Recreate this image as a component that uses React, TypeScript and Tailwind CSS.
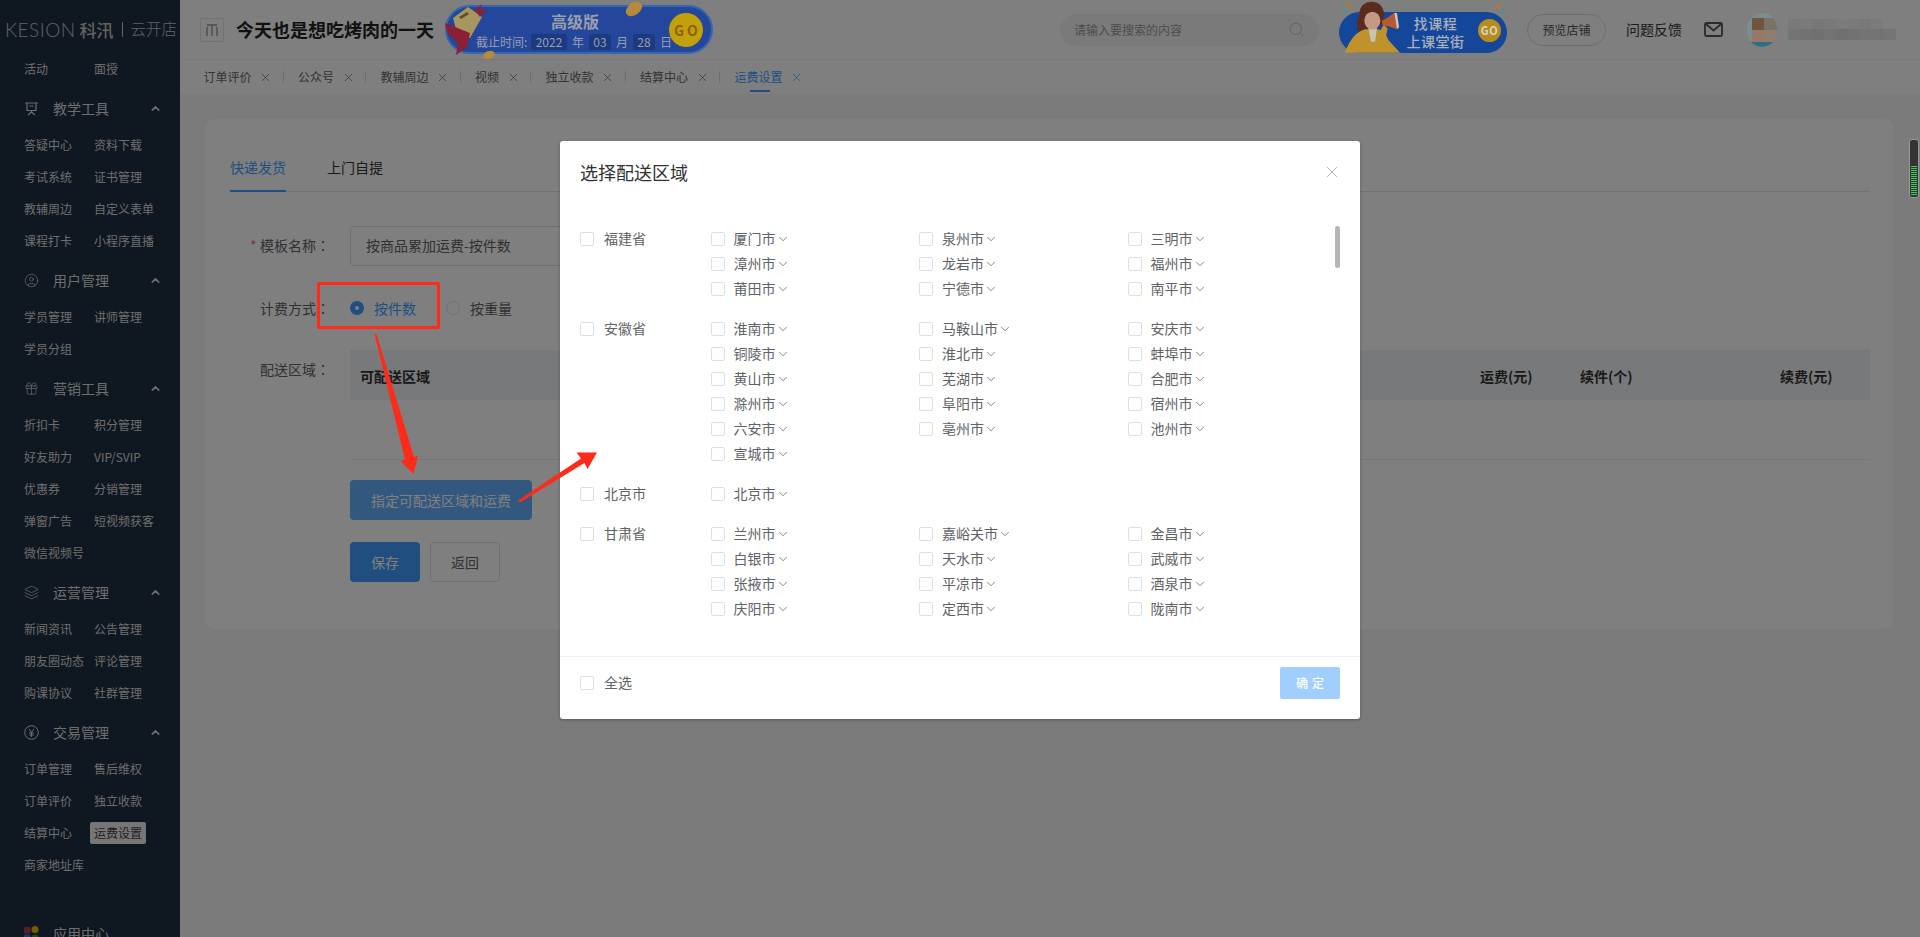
import { ChevronDown, ChevronUp, CircleUser, Gift, Layers, Search, X } from 'lucide-react'
import type { ReactNode } from 'react'

const EaselIcon = () => (
  <svg width="15" height="15" viewBox="0 0 15 15" fill="none" stroke="currentColor" strokeWidth="1.2">
    <path d="M1 2h13M3 2v7.5h9V2M7.5 9.5v1.5M4 14l3.5-3 3.5 3M5.5 5h4" />
  </svg>
)

const YenIcon = () => (
  <svg width="15" height="15" viewBox="0 0 15 15" fill="none" stroke="currentColor" strokeWidth="1">
    <circle cx="7.5" cy="7.5" r="6.8" />
    <path d="M5 4l2.5 3.5L10 4M7.5 7.5V12M5.2 8h4.6M5.2 10h4.6" />
  </svg>
)

const AppsIcon = () => (
  <svg width="15" height="15" viewBox="0 0 15 15">
    <rect x="0" y="1" width="6.5" height="6.5" rx="1.5" fill="#b0414c" />
    <circle cx="11" cy="3.5" r="3.5" fill="#e6b800" />
    <rect x="0" y="8.5" width="6.5" height="6.5" rx="1.5" fill="#3b78d8" />
    <rect x="8" y="8.5" width="6.5" height="6.5" rx="3" fill="#2e9c4a" />
  </svg>
)

const groups: { title: string; icon: ReactNode; items: string[] }[] = [
  { title: '教学工具', icon: <EaselIcon />, items: ['答疑中心', '资料下载', '考试系统', '证书管理', '教辅周边', '自定义表单', '课程打卡', '小程序直播'] },
  { title: '用户管理', icon: <CircleUser size={17} strokeWidth={1.1} />, items: ['学员管理', '讲师管理', '学员分组'] },
  { title: '营销工具', icon: <Gift size={17} strokeWidth={1.1} />, items: ['折扣卡', '积分管理', '好友助力', 'VIP/SVIP', '优惠券', '分销管理', '弹窗广告', '短视频获客', '微信视频号'] },
  { title: '运营管理', icon: <Layers size={17} strokeWidth={1.1} />, items: ['新闻资讯', '公告管理', '朋友圈动态', '评论管理', '购课协议', '社群管理'] },
  { title: '交易管理', icon: <YenIcon />, items: ['订单管理', '售后维权', '订单评价', '独立收款', '结算中心', '运费设置', '商家地址库'] },
]

const tabs = ['订单评价', '公众号', '教辅周边', '视频', '独立收款', '结算中心', '运费设置']

const provinces = [
  { name: '福建省', cities: ['厦门市', '泉州市', '三明市', '漳州市', '龙岩市', '福州市', '莆田市', '宁德市', '南平市'] },
  { name: '安徽省', cities: ['淮南市', '马鞍山市', '安庆市', '铜陵市', '淮北市', '蚌埠市', '黄山市', '芜湖市', '合肥市', '滁州市', '阜阳市', '宿州市', '六安市', '亳州市', '池州市', '宣城市'] },
  { name: '北京市', cities: ['北京市'] },
  { name: '甘肃省', cities: ['兰州市', '嘉峪关市', '金昌市', '白银市', '天水市', '武威市', '张掖市', '平凉市', '酒泉市', '庆阳市', '定西市', '陇南市'] },
]

// blurred-out user name in the header
const nameTop = ['#797979', '#7b7b7b', '#777777', '#797979', '#7c7c7c', '#7a7a7a', '#787878', '#7b7b7b']
const nameBottom = ['#747474', '#727272', '#707070', '#737373', '#707070', '#727272', '#747474', '#737373', '#757575']

const Check = () => <span className="inline-block w-[14px] h-[14px] shrink-0 bg-white border border-[#dcdfe6] rounded-[2px]" />
const Colon = () => <span className="[font-family:'Noto_Sans_CJK_TC',sans-serif]">：</span>

function Sidebar() {
  return (
    <aside className="w-[180px] shrink-0 h-[937px] overflow-hidden bg-[#1e2e40] text-[#dcdcdc]">
      <div className="h-[54px] pt-[4px] pl-[5px] flex items-center text-[#c4c4c4] leading-none">
        <span className="[font-family:Lato,sans-serif] font-light text-[19px] tracking-[0.5px]">KESION</span>
        <span className="ml-[4px] text-[17px] font-medium">科汛</span>
        <span className="ml-[8px] mr-[8px] w-px h-[15px] bg-[#c4c4c4]" />
        <span className="text-[15.5px] font-light">云开店</span>
      </div>
      <div className="grid grid-cols-[70px_70px] pl-[24px] pb-[2px] h-[32px] text-[12px] leading-[30px]">
        <span>活动</span>
        <span>面授</span>
      </div>
      {groups.map((g, i) => (
        <div key={g.title} className={i === 0 ? 'mt-[3px]' : 'mt-[4px]'}>
          <div className="h-[40px] flex items-center pl-[24px] pr-[18px] pb-[2px]">
            <span className="w-[15px] flex justify-center">{g.icon}</span>
            <span className="ml-[14px] text-[14px] flex-1">{g.title}</span>
            <ChevronUp size={13} strokeWidth={3} />
          </div>
          <div className="grid grid-cols-[70px_70px] pl-[24px] text-[12px] leading-[32px]">
            {g.items.map(t => (
              <span key={t} className="h-[32px]">
                {t === '运费设置' ? (
                  <span className="inline-block -ml-[4px] px-[4px] h-[22px] leading-[22px] rounded-[2px] bg-[#ececec] text-[#444]">{t}</span>
                ) : t}
              </span>
            ))}
          </div>
        </div>
      ))}
      <div className="mt-[32px] h-[40px] flex items-center pl-[24px]">
        <AppsIcon />
        <span className="ml-[14px] text-[14px]">应用中心</span>
      </div>
    </aside>
  )
}

function PlanBanner() {
  return (
    <div className="relative z-40 ml-[12px] w-[268px] h-[49px] rounded-full bg-[#24479b] border-2 border-[#3767ad] text-[#9a9fae]">
      <svg className="absolute -left-[2px] -top-[2px] overflow-visible" width="268" height="49" fill="none">
        <path d="M8 13L23 2l14 10-12 21-12-1z" fill="#a89660" />
        <path d="M14 12l8-5 2 2-8 5z" fill="#5c5030" />
        <path d="M0 18l25 10-3 14-11 8 2-12-11-11z" fill="#8c1f33" />
        <path d="M30 5l7-6-2 6 7-1-7 8z" fill="#8c1f33" />
        <ellipse cx="189" cy="4" rx="9" ry="6" transform="rotate(-35 189 4)" fill="#b48a3c" />
        <ellipse cx="44" cy="50" rx="6" ry="4" transform="rotate(-20 44 50)" fill="#b48a3c" />
      </svg>
      <div className="absolute left-[93px] top-[3px] w-[70px] text-center font-bold text-[16px] leading-[22px]">高级版</div>
      <div className="absolute left-[29px] top-[27px] flex items-center h-[16px] text-[12px] whitespace-nowrap">
        <span className="w-[55px]">截止时间:</span>
        <span className="w-[36px] text-center leading-[16px] rounded-[2px] bg-[#1b3a80]">2022</span>
        <span className="w-[22px] text-center">年</span>
        <span className="w-[22px] text-center leading-[16px] rounded-[2px] bg-[#1b3a80]">03</span>
        <span className="w-[22px] text-center">月</span>
        <span className="w-[22px] text-center leading-[16px] rounded-[2px] bg-[#1b3a80]">28</span>
        <span className="w-[22px] text-center">日</span>
      </div>
      <div className="absolute left-[222px] top-[6px] w-[34px] h-[34px] rounded-full bg-[#c4a008] flex items-center justify-center text-[14px] font-bold tracking-[3px] pl-[3px] text-[#8c5f10]">GO</div>
    </div>
  )
}

function CourseBanner() {
  return (
    <div className="relative z-40 ml-[20px] w-[168px] h-[60px]">
      <div className="absolute left-0 top-[12px] w-[168px] h-[41px] rounded-full bg-[#14479a] flex flex-col items-center pl-[25px] text-[#aab0bc] text-[14px] leading-[18px] tracking-[0.5px] font-medium pt-[2px]">
        <span>找课程</span>
        <span>上课堂街</span>
      </div>
      <div className="absolute left-[139px] top-[19px] w-[23px] h-[23px] rounded-full bg-[#b88c1c] flex items-center justify-center text-[11px] font-bold tracking-[0.5px] text-[#d6d6c8]">GO</div>
      <svg className="absolute -left-[4px] top-0" width="180" height="60" viewBox="0 0 540 180" fill="none">
        <path d="M72 45Q75 5 112 5Q148 8 147 50L142 72L110 95L68 92Q62 70 72 45Z" fill="#5a2c1e" />
        <path d="M30 158Q50 100 90 88L130 88Q150 92 160 120L195 158Z" fill="#c0922c" />
        <path d="M100 85h26l-6 40h-12z" fill="#c9c4b0" />
        <ellipse cx="112" cy="62" rx="24" ry="27" fill="#c49a84" />
        <path d="M84 38Q112 14 138 42L136 30Q112 8 86 28Z" fill="#5a2c1e" />
        <path d="M140 62l16-8 22-16 8 50-28-10-12 8z" fill="#b85a30" />
        <path d="M178 38l8 50 6-6-6-42z" fill="#d8c8b0" />
        <path d="M130 105l14-28 14 8-8 38z" fill="#c0922c" />
        <path d="M34 8l16 12M482 24l18-12" stroke="#b47a2a" strokeWidth="7" />
        <path d="M22 30l13 3M498 30l8 8" stroke="#3e9a9a" strokeWidth="7" />
      </svg>
    </div>
  )
}

function Header() {
  return (
    <header className="bg-white h-[94px] shrink-0">
      <div className="h-[60px] flex items-center pl-[20px] pr-[24px] border-b border-[#f2f2f2]">
        <div className="w-[24px] h-[24px] border border-[#e5e5e5] rounded-[2px] flex items-center justify-center text-[#999]">
          <svg width="12" height="12" viewBox="0 0 12 12" fill="none" stroke="currentColor" strokeWidth="1.4">
            <path d="M1 3v9M6 1v11M11 3v9M1 1h10" />
          </svg>
        </div>
        <div className="ml-[12px] w-[197px] text-[18px] leading-[24px] pb-[2px] font-bold text-[#222] whitespace-nowrap">今天也是想吃烤肉的一天</div>
        <PlanBanner />
        <div className="ml-auto w-[259px] h-[32px] rounded-full bg-[#f5f5f7] flex items-center justify-between pl-[14px] pr-[14px] text-[12px] text-[#999]">
          <span>请输入要搜索的内容</span>
          <Search size={17} strokeWidth={1.5} className="text-[#ccc]" />
        </div>
        <CourseBanner />
        <div className="ml-[20px] w-[79px] h-[32px] rounded-full border border-[#ddd] flex items-center justify-center text-[12px] text-[#555]">预览店铺</div>
        <span className="ml-[20px] text-[14px] text-[#333]">问题反馈</span>
        <svg className="ml-[22px]" width="19" height="15" viewBox="0 0 19 15" fill="none" stroke="#555" strokeWidth="1.8">
          <rect x="1" y="1" width="17" height="13" rx="1.5" />
          <path d="M2 2l7.5 6.5L17 2" />
        </svg>
        <div className="relative z-40 ml-[24px] w-[30px] h-[34px] rounded-full overflow-hidden bg-[#7d8c91] grid grid-cols-[5px_12px_13px] grid-rows-[5px_12px_12px_5px]">
          <span className="col-span-3" />
          <span />
          <span className="bg-[#6e553c]" />
          <span className="bg-[#787364]" />
          <span />
          <span className="bg-[#967869]" />
          <span className="bg-[#917d6e]" />
          <span className="col-span-3 bg-[#326e82]" />
        </div>
        <div className="relative z-40 ml-[11px] w-[108px] h-[21px] flex flex-col">
          <div className="flex w-[95px] h-[10px]">
            {nameTop.map((c, i) => <span key={i} className="flex-1" style={{ background: c }} />)}
          </div>
          <div className="flex w-[108px] h-[11px]">
            {nameBottom.map((c, i) => <span key={i} className="flex-1" style={{ background: c }} />)}
          </div>
        </div>
      </div>
      <div className="h-[34px] flex items-center pl-[9px] text-[12px] text-[#666]">
        {tabs.map((t, i) => {
          const active = i === tabs.length - 1
          return (
            <div key={t} className={`relative flex items-center h-[34px] pl-[14.5px] ${active ? 'text-[#409eff]' : ''}`}>
              <span>{t}</span>
              <X size={13} strokeWidth={1.3} className="ml-[7.5px]" />
              <span className={`ml-[10.5px] w-px h-[12px] ${active ? '' : 'bg-[#ddd]'}`} />
              {active && <span className="absolute left-[29.5px] bottom-[2px] w-[20px] h-[2px] bg-[#409eff]" />}
            </div>
          )
        })}
      </div>
    </header>
  )
}

function Card() {
  return (
    <div className="ml-[25px] mt-[25px] w-[1689px] h-[510px] bg-white rounded-[10px] pt-[30px] pl-[25px] pr-[24px] text-[14px] text-[#606266]">
      <div className="h-[43px] flex gap-[41px] border-b border-[#e4e7ed]">
        <span className="h-[43px] leading-[36px] border-b-2 border-[#409eff] text-[#409eff]">快递发货</span>
        <span className="leading-[36px] text-[#333]">上门自提</span>
      </div>
      <div className="mt-[34px] flex items-center h-[40px]">
        <div className="w-[120px] pl-[20px] pb-[2px]"><span className="inline-block w-[10px] text-[#f56c6c]">*</span>模板名称<Colon /></div>
        <div className="w-[500px] h-[40px] rounded-[4px] border border-[#dcdfe6] pl-[15px] leading-[36px]">按商品累加运费-按件数</div>
      </div>
      <div className="mt-[22px] flex items-center h-[40px]">
        <div className="w-[120px] pl-[30px]">计费方式<Colon /></div>
        <span className="w-[14px] h-[14px] rounded-full bg-[#409eff] flex items-center justify-center"><span className="w-[4px] h-[4px] rounded-full bg-white" /></span>
        <span className="ml-[10px] text-[#409eff]">按件数</span>
        <span className="ml-[30px] w-[14px] h-[14px] rounded-full bg-white border border-[#dcdfe6]" />
        <span className="ml-[10px]">按重量</span>
      </div>
      <div className="mt-[22px] flex">
        <div className="w-[120px] pl-[30px] leading-[38px]">配送区域<Colon /></div>
        <div className="flex-1">
          <div className="h-[110px] border-b border-[#ebeef5]">
            <div className="h-[50px] pt-[2px] pl-[10px] bg-[#f1f3f5] grid grid-cols-[1120px_100px_200px_1fr] items-center font-bold text-[#333]">
              <span>可配送区域</span>
              <span>运费(元)</span>
              <span>续件(个)</span>
              <span>续费(元)</span>
            </div>
          </div>
          <button className="block mt-[20px] w-[182px] h-[40px] rounded-[4px] bg-[#66b1ff] text-white">指定可配送区域和运费</button>
          <div className="mt-[22px] flex gap-[10px]">
            <button className="w-[70px] h-[40px] rounded-[4px] bg-[#409eff] text-white">保存</button>
            <button className="w-[70px] h-[40px] rounded-[4px] border border-[#dcdfe6] bg-white">返回</button>
          </div>
        </div>
      </div>
    </div>
  )
}

function AreaModal() {
  return (
    <div className="absolute z-40 left-[560px] top-[141px] w-[800px] h-[578px] bg-white rounded-[3px] shadow-[0_1px_3px_rgba(0,0,0,0.3)] flex flex-col text-[14px] text-[#606266]">
      <div className="h-[85px] shrink-0 pl-[20px] pr-[19px] pt-[18px] flex justify-between">
        <h2 className="text-[18px] leading-[26px] text-[#303133]">选择配送区域</h2>
        <X size={18} strokeWidth={1} className="mt-[4px] text-[#909399]" />
      </div>
      <div className="relative h-[430px] overflow-hidden pl-[20px]">
        {provinces.map(p => (
          <div key={p.name} className="flex mb-[15px]">
            <div className="w-[130.5px] h-[25px] flex items-center gap-[10px]">
              <Check />
              <span>{p.name}</span>
            </div>
            <div className="grid grid-cols-[208.5px_208.5px_208.5px]">
              {p.cities.map(c => (
                <div key={c} className="h-[25px] flex items-center">
                  <Check />
                  <span className="ml-[9px]">{c}</span>
                  <ChevronDown size={14} strokeWidth={1.3} className="text-[#606266]" />
                </div>
              ))}
            </div>
          </div>
        ))}
        <div className="absolute right-[20px] top-0 w-[5px] h-[42px] rounded-full bg-[#b4b4b4]" />
      </div>
      <div className="h-[63px] shrink-0 border-t border-[#ebeef5] pl-[20px] pr-[20px] pb-[10px] flex items-center justify-between">
        <div className="flex items-center gap-[10px]">
          <Check />
          <span className="pb-[2px]">全选</span>
        </div>
        <button className="w-[60px] h-[32px] rounded-[2px] bg-[#a0cfff] text-white text-[12px] font-medium tracking-[4px] pl-[4px]">确定</button>
      </div>
    </div>
  )
}

export default function App() {
  return (
    <div className="relative flex w-[1920px] h-[937px] overflow-hidden bg-[#f6f6f8] [font-family:'Noto_Sans_CJK_SC',sans-serif]">
      <Sidebar />
      <main className="flex-1 flex flex-col">
        <Header />
        <Card />
      </main>
      <div className="absolute inset-0 z-30 bg-black/50" />
      <AreaModal />
      {/* tutorial annotations drawn on top of the screenshot */}
      <div className="absolute z-50 left-[317px] top-[282px] w-[123px] h-[47px] border-[3px] border-[#ff2a1a] rounded-[2px]" />
      <svg className="absolute z-50 left-0 top-0 pointer-events-none" width="1920" height="937" fill="#ff2a1a">
        <polygon points="374.5,334 376.5,334 414,457 418,455.5 413.5,474 400.5,461 405,459.5" />
        <polygon points="518,500.5 581,458.5 576.5,452.5 597,452.5 587.5,469 584.5,463 520,502.5" />
      </svg>
      {/* desktop widget at the right edge */}
      <div className="absolute z-50 left-[1909px] top-[139px] w-[10px] h-[59px] rounded-[3px] bg-[#333] border border-[#999] flex flex-col justify-end gap-[1px] px-[1px] pb-[2px]">
        {Array.from({ length: 15 }).map((_, i) => (
          <span key={i} className="block h-[1px] bg-[#35d15a]" />
        ))}
      </div>
    </div>
  )
}
